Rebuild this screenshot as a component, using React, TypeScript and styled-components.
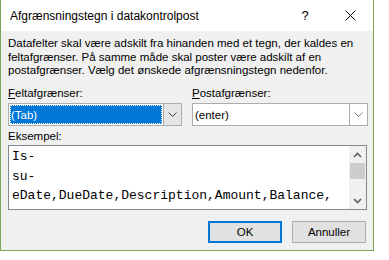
import React from 'react';
import styled, { createGlobalStyle } from 'styled-components';

const GlobalStyle = createGlobalStyle`
  body {
    margin: 0;
    background: #ffffff;
    font-family: "Liberation Sans", Arial, sans-serif;
  }
`;

const Window = styled.div`
  width: 372px;
  height: 250px;
  border: 1px solid #7fa55a;
  border-top: none;
  display: flex;
  flex-direction: column;
  background: #f0f0f0;
`;

const TitleBar = styled.div`
  height: 31px;
  background: #ffffff;
  display: flex;
  align-items: center;
  padding-left: 9px;
  flex-shrink: 0;
`;

const Title = styled.div`
  flex: 1;
  font-size: 12px;
  color: #000;
`;

const TitleButton = styled.div<{ w: number }>`
  width: ${p => p.w}px;
  height: 31px;
  display: flex;
  align-items: center;
  justify-content: center;
  font-size: 13px;
  color: #000;
`;

const Body = styled.div`
  flex: 1;
  padding: 6px 6px 0 7px;
  display: flex;
  flex-direction: column;
`;

const Intro = styled.p`
  margin: 0;
  font-size: 11.5px;
  line-height: 13.5px;
  color: #000;
  height: 49px;
`;

const FieldRow = styled.div`
  display: grid;
  grid-template-columns: 174px 176px;
  column-gap: 10px;
`;

const Field = styled.div`
  display: flex;
  flex-direction: column;
`;

const Label = styled.div`
  font-size: 11.5px;
  color: #000;
  height: 15px;
  line-height: 15px;
  margin-bottom: 2px;
  u {
    text-decoration: underline;
  }
`;

const Combo = styled.div`
  height: 21px;
  border: 1px solid #adadad;
  background: #ffffff;
  display: flex;
`;

const ComboValue = styled.div<{ focused?: boolean }>`
  flex: 1;
  margin: ${p => (p.focused ? '1px' : '0')};
  padding-left: ${p => (p.focused ? '1px' : '2px')};
  display: flex;
  align-items: center;
  font-size: 11.5px;
  color: ${p => (p.focused ? '#ffffff' : '#000')};
  background: ${p => (p.focused ? '#0078d7' : 'transparent')};
  outline: ${p => (p.focused ? '1px dotted #ffffff' : 'none')};
  outline-offset: -1px;
`;

const ComboArrow = styled.div<{ focused?: boolean }>`
  width: 17px;
  border-left: 1px solid #adadad;
  background: ${p => (p.focused ? '#e5e5e5' : '#ffffff')};
  display: flex;
  align-items: center;
  justify-content: center;
`;

const SampleLabel = styled(Label)`
  margin-top: 3px;
  margin-bottom: 1px;
`;

const SampleBox = styled.div`
  height: 63px;
  width: 357px;
  border: 1px solid #828790;
  background: #ffffff;
  display: flex;
  overflow: hidden;
`;

const SampleText = styled.div`
  flex: 1;
  padding: 1px 0 0 3px;
  font-family: "Liberation Mono", "Courier New", monospace;
  font-size: 13px;
  line-height: 19.5px;
  color: #000;
  white-space: pre;
  overflow: hidden;
`;

const ScrollBar = styled.div`
  width: 17px;
  background: #f0f0f0;
  display: flex;
  flex-direction: column;
`;

const ScrollArrow = styled.div`
  height: 17px;
  display: flex;
  align-items: center;
  justify-content: center;
`;

const ScrollTrack = styled.div`
  flex: 1;
  display: flex;
  flex-direction: column;
`;

const Thumb = styled.div`
  margin: 0 1px;
  height: 16px;
  background: #cdcdcd;
`;

const ButtonRow = styled.div`
  display: flex;
  justify-content: flex-end;
  gap: 10px;
  margin-top: 11px;
  padding-right: 1px;
`;

const Button = styled.div<{ primary?: boolean }>`
  width: ${p => (p.primary ? '70px' : '72px')};
  height: ${p => (p.primary ? '18px' : '20px')};
  border: ${p => (p.primary ? '2px solid #0078d7' : '1px solid #adadad')};
  background: #e1e1e1;
  display: flex;
  align-items: center;
  justify-content: center;
  font-size: 11.5px;
  color: #000;
`;

const Chevron = ({ up, color }: { up?: boolean; color: string }) => (
  <svg width="9" height="5" viewBox="0 0 9 5">
    <polyline
      points={up ? '0.5,4.5 4.5,0.5 8.5,4.5' : '0.5,0.5 4.5,4.5 8.5,0.5'}
      fill="none"
      stroke={color}
      strokeWidth="1"
    />
  </svg>
);

const ScrollChevron = ({ up }: { up?: boolean }) => (
  <svg width="9" height="6" viewBox="0 0 9 6">
    <polyline
      points={up ? '1,5 4.5,1.5 8,5' : '1,1 4.5,4.5 8,1'}
      fill="none"
      stroke="#606060"
      strokeWidth="1.6"
    />
  </svg>
);

const sample = ['Is-', 'su-', 'eDate,DueDate,Description,Amount,Balance,', 'TransStat,'];

export default function App() {
  return (
    <>
      <GlobalStyle />
      <Window>
        <TitleBar>
          <Title>Afgrænsningstegn i datakontrolpost</Title>
          <TitleButton w={44}>?</TitleButton>
          <TitleButton w={46}>
            <svg width="11" height="11" viewBox="0 0 11 11">
              <path d="M0.5 0.5 L10.5 10.5 M10.5 0.5 L0.5 10.5" stroke="#000" strokeWidth="1" />
            </svg>
          </TitleButton>
        </TitleBar>
        <Body>
          <Intro>
            Datafelter skal være adskilt fra hinanden med et tegn, der kaldes en feltafgrænser. På samme
            måde skal poster være adskilt af en postafgrænser. Vælg det ønskede afgrænsningstegn nedenfor.
          </Intro>
          <FieldRow>
            <Field>
              <Label><u>F</u>eltafgrænser:</Label>
              <Combo>
                <ComboValue focused>(Tab)</ComboValue>
                <ComboArrow focused>
                  <Chevron color="#404040" />
                </ComboArrow>
              </Combo>
            </Field>
            <Field>
              <Label><u>P</u>ostafgrænser:</Label>
              <Combo>
                <ComboValue>(enter)</ComboValue>
                <ComboArrow>
                  <Chevron color="#808080" />
                </ComboArrow>
              </Combo>
            </Field>
          </FieldRow>
          <SampleLabel>Eksempel:</SampleLabel>
          <SampleBox>
            <SampleText>{sample.join('\n')}</SampleText>
            <ScrollBar>
              <ScrollArrow>
                <ScrollChevron up />
              </ScrollArrow>
              <ScrollTrack>
                <Thumb />
              </ScrollTrack>
              <ScrollArrow>
                <ScrollChevron />
              </ScrollArrow>
            </ScrollBar>
          </SampleBox>
          <ButtonRow>
            <Button primary>OK</Button>
            <Button>Annuller</Button>
          </ButtonRow>
        </Body>
      </Window>
    </>
  );
}
